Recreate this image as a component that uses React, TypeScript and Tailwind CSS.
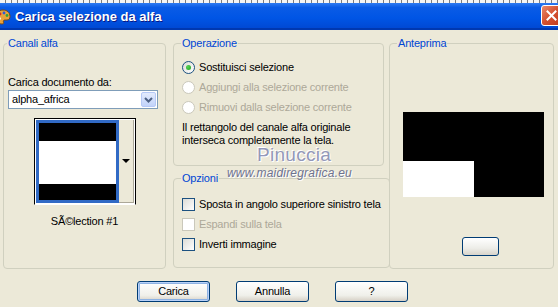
import React from "react";

function Group({
  title,
  className,
  children,
}: {
  title: string;
  className: string;
  children?: React.ReactNode;
}) {
  return (
    <fieldset className={`border border-[#D0D0BF] rounded-[4px] ${className}`}>
      <legend className="ml-[-1px] px-[1px] leading-[13px] text-[#0046D5]">{title}</legend>
      {children}
    </fieldset>
  );
}

function Radio({ label, checked, disabled }: { label: string; checked?: boolean; disabled?: boolean }) {
  return (
    <div className="flex h-[20px] items-center gap-[4px] whitespace-nowrap">
      <span
        className={
          disabled
            ? "flex h-[13px] w-[13px] shrink-0 items-center justify-center rounded-full border border-[#CAC8BB] bg-white"
            : "flex h-[13px] w-[13px] shrink-0 items-center justify-center rounded-full border border-[#1C5180] bg-[linear-gradient(135deg,#DCDCD7,#FFFFFF)]"
        }
      >
        {checked && (
          <span className="h-[5px] w-[5px] rounded-full bg-[radial-gradient(circle_at_35%_35%,#55D455,#21A121)]" />
        )}
      </span>
      <span className={disabled ? "text-[#ACA899]" : "text-black"}>{label}</span>
    </div>
  );
}

function Check({ label, disabled }: { label: string; disabled?: boolean }) {
  return (
    <div className="flex h-[20px] items-center gap-[4px] whitespace-nowrap">
      <span
        className={
          disabled
            ? "h-[13px] w-[13px] shrink-0 border border-[#CAC8BB] bg-white"
            : "h-[13px] w-[13px] shrink-0 border border-[#1C5180] bg-[linear-gradient(135deg,#DCDCD7,#FFFFFF)]"
        }
      />
      <span className={disabled ? "text-[#ACA899]" : "text-black"}>{label}</span>
    </div>
  );
}

function XpButton({ label, isDefault }: { label: string; isDefault?: boolean }) {
  return (
    <button
      className={
        isDefault
          ? "flex h-[21px] w-[73px] items-center justify-center rounded-[3px] border border-[#003C74] bg-[linear-gradient(#FFFFFF,#F0F0EA_70%,#D6D0C5)] shadow-[inset_0_0_0_1px_#B9D1F8,inset_0_0_0_2px_#8DB2E3]"
          : "flex h-[21px] w-[73px] items-center justify-center rounded-[3px] border border-[#003C74] bg-[linear-gradient(#FFFFFF,#F0F0EA_70%,#D6D0C5)]"
      }
    >
      {label}
    </button>
  );
}

function PaletteIcon() {
  return (
    <svg width="16" height="16" viewBox="0 0 16 16" className="-ml-[5px]">
      <path d="M8 1C3.5 1 1 4 1 8s2.5 7 6 7c1.5 0 2-1 1.5-2s0-2 1.5-2h2c2 0 3-1.5 3-3.5C15 3.5 12 1 8 1z" fill="#E9A23B" stroke="#7A4A12" strokeWidth="1" />
      <circle cx="5" cy="5" r="1.4" fill="#D8261E" />
      <circle cx="9" cy="4" r="1.4" fill="#2C5AD8" />
      <circle cx="12" cy="6.5" r="1.4" fill="#2FA43A" />
      <circle cx="4.5" cy="9.5" r="1.4" fill="#FFFFFF" />
    </svg>
  );
}

export default function App() {
  return (
    <div className="h-[307px] w-[558px] overflow-hidden bg-[#ECE9D8] font-['Liberation_Sans',Arial,sans-serif] text-[11px] tracking-[-0.2px] text-black">
      {/* title bar */}
      <div className="h-[3px] bg-[repeating-linear-gradient(90deg,#F4F4F4_0_5px,#7C7C7C_5px_6px)]" />
      <div className="flex h-[27px] items-center justify-between overflow-hidden border-b-[2px] border-[#0038B0] bg-[linear-gradient(#2E7BF2,#0A5BE6_18%,#0055E5_60%,#0049D4)]">
        <div className="flex items-center gap-[4px] pt-[2px]">
          <PaletteIcon />
          <span className="text-[13px] font-bold leading-[15px] tracking-normal text-white [text-shadow:1px_1px_#0A1883]">
            Carica selezione da alfa
          </span>
        </div>
        <div className="-mr-[4px] flex h-[21px] w-[21px] items-center justify-center rounded-[3px] border border-white bg-[linear-gradient(135deg,#E98A6C,#D4502F_50%,#C13A1C)]">
          <svg width="11" height="11" viewBox="0 0 11 11">
            <path d="M1.5 1.5l8 8M9.5 1.5l-8 8" stroke="#FFFFFF" strokeWidth="2" strokeLinecap="square" />
          </svg>
        </div>
      </div>

      {/* groups */}
      <div className="relative flex pl-[3px] pt-[7px]">
        <Group title="Canali alfa" className="h-[232px] w-[163px] px-[4px]">
          <div className="mt-[26px] leading-[13px]">Carica documento da:</div>
          <div className="mt-[1px] flex h-[19px] w-[150px] items-center border border-[#7F9DB9] bg-white">
            <span className="flex-1 pl-[3px]">alpha_africa</span>
            <span className="mr-[1px] flex h-[15px] w-[15px] items-center justify-center rounded-[2px] border border-[#B6C9F7] bg-[linear-gradient(#E3EBFD,#C2D3FA)]">
              <svg width="9" height="6" viewBox="0 0 9 6">
                <path d="M1 1l3.5 3.5L8 1" stroke="#4D6185" strokeWidth="2" fill="none" />
              </svg>
            </span>
          </div>
          <div className="mx-auto mt-[9px] flex h-[87px] w-[102px] border border-black border-b-white bg-white p-[1px]">
            <div className="flex w-[83px] flex-col border-[3px] border-[#316AC5]">
              <div className="h-[18px] bg-black" />
              <div className="flex-1 bg-white" />
              <div className="h-[16px] bg-black" />
            </div>
            <div className="flex flex-1 items-center justify-center border-b border-r border-[#ACA899] bg-[#ECE9D8]">
              <span className="h-0 w-0 border-x-[4px] border-t-[4px] border-x-transparent border-t-black" />
            </div>
          </div>
          <div className="mt-[10px] text-center leading-[13px]">SÃ©lection #1</div>
        </Group>

        <div className="ml-[7px] flex w-[211px] flex-col gap-[6px]">
          <Group title="Operazione" className="h-[129px] px-[8px]">
            <div className="mt-[7px]">
              <Radio label="Sostituisci selezione" checked />
              <Radio label="Aggiungi alla selezione corrente" disabled />
              <Radio label="Rimuovi dalla selezione corrente" disabled />
            </div>
            <p className="mt-[4px] leading-[13px]">
              Il rettangolo del canale alfa originale
              <br />
              interseca completamente la tela.
            </p>
          </Group>
          <Group title="Opzioni" className="h-[96px] px-[8px]">
            <div className="mt-[9px]">
              <Check label="Sposta in angolo superiore sinistro tela" />
              <Check label="Espandi sulla tela" disabled />
              <Check label="Inverti immagine" />
            </div>
          </Group>
        </div>

        <Group title="Anteprima" className="ml-[5px] h-[232px] w-[165px] px-[8px]">
          <div className="ml-[5px] mt-[62px] flex h-[85px] w-[141px] flex-col justify-end bg-black">
            <div className="h-[36px] w-[71px] bg-white" />
          </div>
          <div className="ml-[64px] mt-[40px] h-[19px] w-[37px] rounded-[3px] border border-[#003C74] bg-[linear-gradient(#FFFFFF,#EDEDE8_60%,#D8D4CA)]" />
        </Group>

        {/* watermark */}
        <div className="absolute left-[257px] top-[115px] text-[19px] leading-[19px] tracking-[0.3px] text-[#9398B9] [text-shadow:1px_1px_0_#FFFFFF,-1px_-1px_0_#FFFFFF]">
          Pinuccia
        </div>
        <div className="absolute left-[227px] top-[137px] text-[12px] italic leading-[12px] tracking-[0.2px] text-[#6E7390] [text-shadow:1px_1px_0_#FFFFFF]">
          www.maidiregrafica.eu
        </div>
      </div>

      {/* buttons */}
      <div className="flex gap-[26px] pl-[137px] pt-[12px]">
        <XpButton label="Carica" isDefault />
        <XpButton label="Annulla" />
        <XpButton label="?" />
      </div>
    </div>
  );
}
